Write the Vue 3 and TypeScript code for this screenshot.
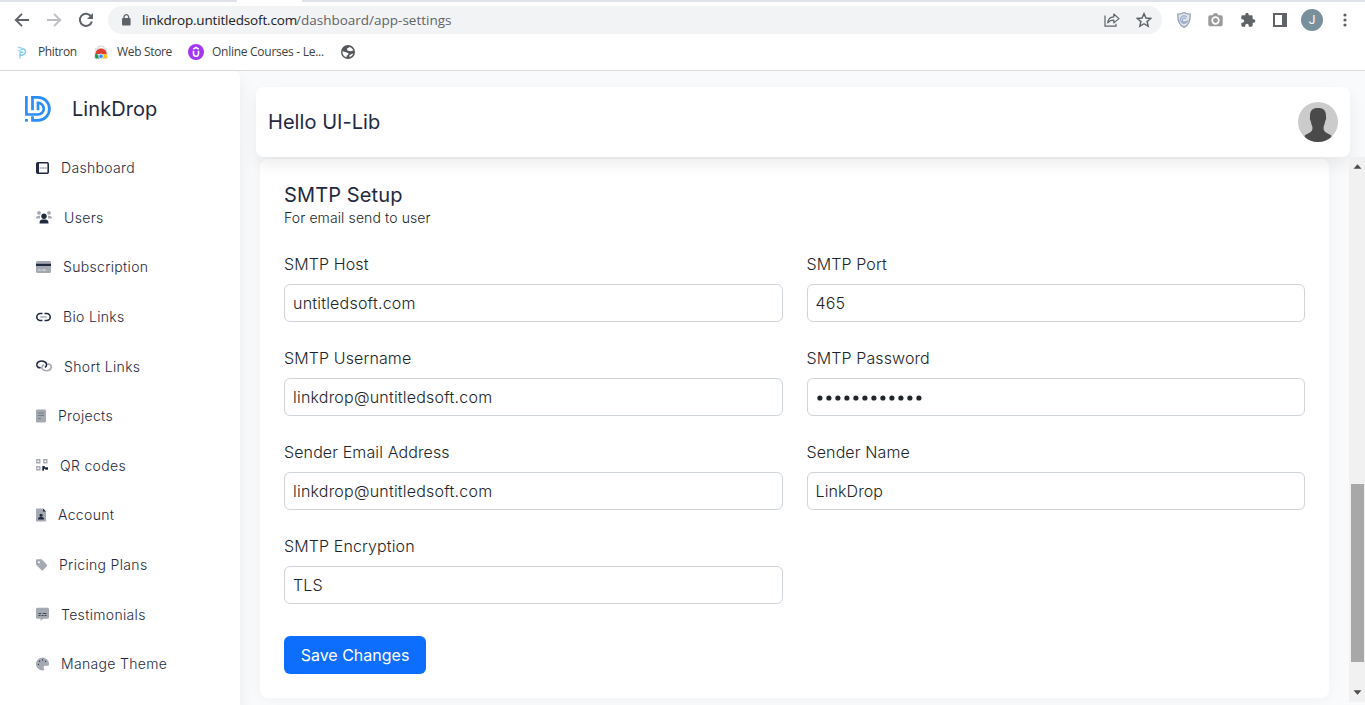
<script setup lang="ts">
interface NavItem {
  icon: string
  label: string
  width: number
}
interface Field {
  label: string
  value: string
  secret?: boolean
}

const navItems: NavItem[] = [
  { icon: 'dashboard', label: 'Dashboard', width: 13 },
  { icon: 'users', label: 'Users', width: 16 },
  { icon: 'card', label: 'Subscription', width: 15 },
  { icon: 'link', label: 'Bio Links', width: 15 },
  { icon: 'short', label: 'Short Links', width: 16 },
  { icon: 'projects', label: 'Projects', width: 10 },
  { icon: 'qr', label: 'QR codes', width: 12 },
  { icon: 'account', label: 'Account', width: 10 },
  { icon: 'tag', label: 'Pricing Plans', width: 11 },
  { icon: 'chat', label: 'Testimonials', width: 13 },
  { icon: 'palette', label: 'Manage Theme', width: 13 },
]

const fields: Field[] = [
  { label: 'SMTP Host', value: 'untitledsoft.com' },
  { label: 'SMTP Port', value: '465' },
  { label: 'SMTP Username', value: 'linkdrop@untitledsoft.com' },
  { label: 'SMTP Password', value: '12', secret: true },
  { label: 'Sender Email Address', value: 'linkdrop@untitledsoft.com' },
  { label: 'Sender Name', value: 'LinkDrop' },
  { label: 'SMTP Encryption', value: 'TLS' },
]
</script>

<template>
  <div class="window">
    <header class="browser">
      <div class="tabstrip"><span class="tab-gap"></span></div>
      <div class="toolbar">
        <svg class="nav-ic back" width="16" height="16" viewBox="0 0 16 16"><path d="M15 8H2.2M8 1.8 1.8 8 8 14.2" fill="none" stroke="#5f6368" stroke-width="1.9" /></svg>
        <svg class="nav-ic fwd" width="16" height="16" viewBox="0 0 16 16"><path d="M1 8h12.8M8 1.8 14.2 8 8 14.2" fill="none" stroke="#bcbec1" stroke-width="1.9" /></svg>
        <svg class="nav-ic reload" width="16" height="16" viewBox="0 0 16 16"><path d="M13.1 4.4A6.1 6.1 0 1 0 13.9 9.4" fill="none" stroke="#5f6368" stroke-width="2" /><path d="M15 1v6H9z" fill="#5f6368" /></svg>
        <div class="omnibox">
          <svg class="lock" width="10" height="12" viewBox="0 0 10 12"><rect x="1" y="4" width="8.6" height="7.6" rx="1" fill="#5f6368" /><path d="M3 4.5V3a2.3 2.3 0 0 1 4.6 0v1.500" fill="none" stroke="#5f6368" stroke-width="1.300" /></svg>
          <span class="host">linkdrop.untitledsoft.com</span><span class="path">/dashboard/app-settings</span>
          <svg class="share" width="16" height="14" viewBox="0 0 16 14"><path d="M1 2.500v10.700h11v-2.500" fill="none" stroke="#5f6368" stroke-width="1.200" /><path d="M3.700 9.900C4.100 6 6.200 4.100 9.800 3.900V1L15 5.600 9.800 9.900V7.200C7.200 7.200 5.300 8 3.700 9.900z" fill="none" stroke="#5f6368" stroke-width="1.200" stroke-linejoin="round" /></svg>
          <svg class="star" width="16" height="16" viewBox="0 0 24 24"><path d="M12 2.500l2.900 6.600 7.200.6-5.500 4.700 1.700 7L12 17.600l-6.300 3.800 1.700-7-5.500-4.700 7.200-.6z" fill="none" stroke="#5f6368" stroke-width="2.200" /></svg>
        </div>
        <div class="extensions">
          <svg class="shield" width="14" height="16" viewBox="0 0 14 16"><path d="M7 .6C9 1.800 11 2.200 13.200 2.200 13.500 8.800 11.600 13.200 7 15.400 2.400 13.200.5 8.800.8 2.200 3 2.200 5 1.800 7 .6z" fill="#dfe3ea" stroke="#929dad" stroke-width="1.200" /><path d="M9.800 5A3.700 3.700 0 1 0 10.700 8.500M8.800 6.800a2 2 0 1 0 .2 2.200" fill="none" stroke="#9caac9" stroke-width="1.200" /></svg>
          <svg class="camera" width="15" height="14" viewBox="0 0 15 14"><path d="M2 2.300h2.500L6 .3h3l1.500 2H13a1.700 1.700 0 0 1 1.700 1.700v7.500A1.700 1.700 0 0 1 13 13.200H2A1.700 1.700 0 0 1 .3 11.500V4A1.700 1.700 0 0 1 2 2.300z" fill="#9a9a9a" /><circle cx="7.500" cy="7.500" r="3.300" fill="none" stroke="#fff" stroke-width="1.700" /></svg>
          <svg class="puzzle" width="16" height="16" viewBox="0 0 24 24"><path d="M20.500 11H19V7a2 2 0 0 0-2-2h-4V3.500a2.500 2.500 0 0 0-5 0V5H4a2 2 0 0 0-2 2v3.800h1.500a2.700 2.700 0 0 1 0 5.400H2V20c0 1.100.9 2 2 2h3.800v-1.500a2.700 2.700 0 0 1 5.400 0V22H17a2 2 0 0 0 2-2v-4h1.500a2.500 2.500 0 0 0 0-5z" fill="#5f6368" /></svg>
          <svg class="panel" width="14" height="14" viewBox="0 0 14 14"><path d="M1 1h12v12H1z" fill="none" stroke="#5f6368" stroke-width="2" /><path d="M9 1h4v12H9z" fill="#5f6368" /></svg>
          <span class="profile">J</span>
          <svg class="more" width="4" height="14" viewBox="0 0 4 14"><circle cx="2" cy="2" r="1.600" fill="#5f6368" /><circle cx="2" cy="7" r="1.600" fill="#5f6368" /><circle cx="2" cy="12" r="1.600" fill="#5f6368" /></svg>
        </div>
      </div>
      <div class="bookmarks">
        <svg class="bm-phitron" width="10" height="13" viewBox="0 0 10 13"><path d="M.8 1.200 4.500 2M1 4.200l2.200.8v7.500" fill="none" stroke="#9fd6f2" stroke-width="1.500" /><path d="M2.500 9C6 9.800 8.800 8 8.500 5.200 8.200 2.800 5.400 2.200 3.700 3.800M3.600 6.200h2.800" fill="none" stroke="#7cc8ec" stroke-width="1.500" /></svg>
        <span class="bm-text phitron">Phitron</span>
        <svg class="bm-store" width="14" height="14" viewBox="0 0 14 14"><path d="M4 4V2.500C4 1.500 5 1 7 1s3 .5 3 1.500V4" fill="none" stroke="#d5d5d5" stroke-width="1.200" /><path d="M1 3h12l1 10.500H0z" fill="#e2e2e2" /><path d="M1.500 9A5.600 5.600 0 0 1 12.700 9L7 9z" fill="#df3e32" /><path d="M1.400 8.500A6 6 0 0 0 1.600 13.500H6L4.300 10z" fill="#169b55" /><path d="M7 9h5.500a6 6 0 0 1 0 4.500H6z" fill="#fbc116" /><circle cx="7" cy="11.300" r="2.300" fill="#4285f4" stroke="#fff" stroke-width=".8" /></svg>
        <span class="bm-text store">Web Store</span>
        <svg class="bm-udemy" width="16" height="16" viewBox="0 0 16 16"><circle cx="8" cy="8" r="8" fill="#a435f0" /><path d="M5.500 6.800v3a2.500 2.500 0 0 0 5 0v-3M5.200 5.100 8 3.500l2.800 1.600" fill="none" stroke="#fff" stroke-width="1.600" /></svg>
        <span class="bm-text courses">Online Courses - Le...</span>
        <svg class="bm-globe" width="14" height="14" viewBox="0 0 14 14"><circle cx="7" cy="7" r="7" fill="#54575b" /><path d="M8.800 1.900 6 3.400l.3 2 3.200.9 2.800-.9A5.600 5.600 0 0 0 8.800 1.900zM1.500 6.300 5 7.300l2.500 1-.6 1.900-1.300.3v1.800C3.200 11.700 1.200 9.300 1.500 6.300zM8.500 12.200V10l1.800-.8 2-.6c-.6 1.900-1.900 3.100-3.800 3.600z" fill="#fff" /></svg>
      </div>
    </header>

    <div class="app">
      <aside class="sidebar">
        <div class="brand">
          <svg width="27" height="27" viewBox="0 0 27 27" fill="none" stroke="#2b8df5" stroke-width="2.700">
            <path d="M2.400 0v18.500H14a5.800 5.800 0 0 0 0-11.600h-1.300" />
            <path d="M7.200 1.400H14a11.400 11.400 0 0 1 0 22.900H8.500v-4" />
            <path d="M8.500 0v14.200M14 7v7.200" />
            <path d="M1 24.300h2.900" />
          </svg>
          <span>LinkDrop</span>
        </div>
        <nav>
          <a v-for="item in navItems" :key="item.label" class="nav-item">
            <svg :width="item.width" height="14" :viewBox="`0 0 ${item.width} 14`">
              <g v-if="item.icon === 'dashboard'"><rect x=".8" y="1.800" width="11.400" height="10.400" rx="1" fill="#fff" stroke="#1f2940" stroke-width="1.600" /><path d="M1.800 2v10" stroke="#1f2940" stroke-width="2.400" /><path d="M3.500 7h8" stroke="#8c94a0" stroke-width="1" /></g>
              <g v-else-if="item.icon === 'users'"><g fill="#a5a9b1"><circle cx="3" cy="2.900" r="1.900" /><circle cx="13" cy="2.900" r="1.900" /><path d="M0 8.500C0 6.200 1.500 5.500 4 5.700v2.800zM16 8.500c0-2.300-1.500-3-4-2.800v2.800z" /></g><circle cx="8" cy="6.200" r="2.700" fill="#1f2940" /><path d="M3.500 13.500c0-3 1-4 3-4h3c2 0 3 1 3 4z" fill="#1f2940" /></g>
              <g v-else-if="item.icon === 'card'"><rect y="1" width="15" height="12" rx="1.600" fill="#a5a9b1" /><path d="M0 3.800h15v2.200H0z" fill="#1f2940" /><path d="M2 10h2.800M5.800 10h4" stroke="#e4e6e9" stroke-width="1.200" /></g>
              <g v-else-if="item.icon === 'link'" fill="none"><path d="M6.500 3.500H4.300a3.500 3.500 0 0 0 0 7h2.200M8.500 3.500h2.200a3.500 3.500 0 0 1 0 7H8.500" stroke="#1f2940" stroke-width="1.600" /><path d="M4.300 7h6.400" stroke="#a5a9b1" stroke-width="1.500" /></g>
              <g v-else-if="item.icon === 'short'" fill="none" stroke-width="1.600"><path d="M11.300 5.200c2.800-.5 4.200 1.100 3.900 3.100-.4 3.300-5 4.200-7.900 2.600-2.600-1.500-1.400-4.300.8-5.100" stroke="#a5a9b1" /><path d="M4.700 8.800C1.900 9 .5 7.200.9 5.200c.5-3.200 5-4 7.800-2.400 2.600 1.500 2.400 4.300.2 5.600" stroke="#1f2940" /></g>
              <g v-else-if="item.icon === 'projects'"><rect y=".5" width="10" height="13" rx="1.200" fill="#a5a9b1" /><path d="M2 4h6M2 6.500h6M2 9.500h3" stroke="#72777f" stroke-width=".9" /></g>
              <g v-else-if="item.icon === 'qr'"><path d="M.8 1.800h3v3h-3zM7.800 1.800h3v3h-3zM.8 8.800h3v3h-3z" fill="none" stroke="#a5a9b1" stroke-width="1.400" /><path d="M6.300 8h2.500v1.300H12v2.500H9.200v-1H8v2H6.300z" fill="#1f2940" /></g>
              <g v-else-if="item.icon === 'account'"><path d="M1 .5h6l3 3v9a1 1 0 0 1-1 1H1a1 1 0 0 1-1-1v-11a1 1 0 0 1 1-1z" fill="#a5a9b1" /><path d="M7 .5 10 3.500H7z" fill="#1f2940" /><circle cx="5" cy="7.200" r="1.500" fill="#1f2940" /><path d="M2 11.500c0-2 1-2.500 3-2.500s3 .5 3 2.500z" fill="#1f2940" /></g>
              <g v-else-if="item.icon === 'tag'"><path d="M0 2.500C0 1.800.5 1.300 1.200 1.300h4.500L11 6.700c.4.400.4 1 0 1.400L7 12.200c-.4.400-1 .4-1.400 0L0 6.800z" fill="#a5a9b1" /><circle cx="2.900" cy="4.200" r="1" fill="#fff" /></g>
              <g v-else-if="item.icon === 'chat'"><path d="M1.500.8h10A1.500 1.500 0 0 1 13 2.300v8a1.500 1.500 0 0 1-1.500 1.500H7.500L4.500 13.800v-2h-3A1.500 1.500 0 0 1 0 10.300v-8A1.500 1.500 0 0 1 1.500.8z" fill="#a5a9b1" /><path d="M2.500 6.500h2.800M6.800 6.500h3.700M2.500 8.500h2M5.500 8.500h2M8.500 8.500h2" stroke="#333b4c" stroke-width=".9" /></g>
              <g v-else><path d="M6.500.5A6.500 6.500 0 0 0 0 7c0 3.500 2.800 6.500 7 6.500 1.500 0 1.300-1.300.8-2.200-.6-1.200 0-2.500 1.500-2.500h2.500c.8 0 1.200-.8 1.200-1.800A6.500 6.500 0 0 0 6.500.5z" fill="#a5a9b1" /><g fill="#1f2940"><circle cx="2.400" cy="7.300" r=".65" /><circle cx="3.600" cy="4.200" r=".65" /><circle cx="6.600" cy="3" r=".65" /><circle cx="9.600" cy="4.300" r=".65" /></g></g>
            </svg>
            <span>{{ item.label }}</span>
          </a>
        </nav>
      </aside>

      <main class="main">
        <div class="topbar">
          <h1>Hello UI-Lib</h1>
          <svg width="40" height="40" viewBox="0 0 40 40">
            <defs><clipPath id="avatar-clip"><circle cx="20" cy="20" r="20" /></clipPath></defs>
            <g clip-path="url(#avatar-clip)"><path d="M0 0h40v40H0z" fill="#cbcbcb" /><path d="M20 6c5.500 0 8 2.600 8 8 0 1 .3 2.400 0 3.500-.2 1-.6 1-.8 1.500-.4 3-1.200 4.500-1.600 5.500v3c1.500 3.500 5 4 7.700 6V40H6.700v-6.500c2.700-2 6.200-2.500 7.700-6v-3c-.5-1-1.200-2.500-1.600-5.500-.2-.5-.6-.5-.8-1.500-.2-1 0-2.500 0-3.500 0-5.400 2.500-8 8-8z" fill="#4a4a4a" /></g>
          </svg>
        </div>
        <div class="scroller">
          <section class="card">
            <h2>SMTP Setup</h2>
            <p>For email send to user</p>
            <div class="form">
              <div v-for="field in fields" :key="field.label" class="field">
                <span class="label">{{ field.label }}</span>
                <div class="control" :class="{ spaced: field.value.includes('.') }">
                  <svg v-if="field.secret" class="dots" width="110" height="8" viewBox="0 0 110 8"><circle v-for="n in Number(field.value)" :key="n" :cx="n * 9 - 5.100" cy="4" r="2.600" fill="#212529" /></svg>
                  <template v-else>{{ field.value }}</template>
                </div>
              </div>
            </div>
            <button type="button">Save Changes</button>
          </section>
          <div class="scrollbar">
            <svg width="9" height="5" viewBox="0 0 9 5"><path d="M.5 4.800 4.500.3l4 4.500z" fill="#4d4d4d" /></svg>
            <span class="thumb"></span>
            <svg width="9" height="5" viewBox="0 0 9 5"><path d="M.5.2 4.500 4.700l4-4.500z" fill="#4d4d4d" /></svg>
          </div>
        </div>
      </main>
    </div>
  </div>
</template>

<style>
html,
body {
  margin: 0;
  overflow: hidden;
}
</style>

<style scoped>
* {
  box-sizing: border-box;
}
svg {
  display: block;
  flex: none;
}
.window {
  width: 1365px;
  height: 705px;
  display: flex;
  flex-direction: column;
  overflow: hidden;
  font-family: Inter, 'Liberation Sans', sans-serif;
  color: #212529;
  background: #f8fafc;
}
.browser {
  height: 71px;
  flex: none;
  background: #fff;
  border-bottom: 1px solid #d8dadd;
  font-family: 'Open Sans', 'Noto Sans', sans-serif;
}
.tabstrip {
  height: 2px;
  background: #dee1e6;
  padding-left: 237px;
}
.tab-gap {
  display: block;
  width: 65px;
  height: 2px;
  background: #fff;
}
.toolbar {
  height: 36px;
  display: flex;
  align-items: center;
  padding-left: 14px;
}
.fwd {
  margin-left: 16px;
}
.reload {
  margin-left: 16px;
}
.omnibox {
  width: 1054px;
  height: 28px;
  margin-left: 14px;
  border-radius: 14px;
  background: #f1f3f4;
  display: flex;
  align-items: center;
  padding-left: 13px;
  font-size: 13.500px;
  white-space: nowrap;
}
.host {
  width: 154px;
  margin-left: 11px;
  color: #202124;
  letter-spacing: -0.170px;
}
.path {
  color: #5f6368;
  letter-spacing: 0;
}
.share {
  margin-left: auto;
}
.star {
  margin: 0 10px 0 16px;
}
.extensions {
  display: flex;
  align-items: center;
  padding-left: 15px;
}
.camera {
  margin-left: 17px;
}
.puzzle {
  margin-left: 17px;
}
.panel {
  margin-left: 17px;
}
.profile {
  width: 22px;
  height: 22px;
  margin-left: 14px;
  border-radius: 50%;
  background: #78909c;
  color: #fff;
  font: 12px/22px Roboto, sans-serif;
  text-align: center;
}
.more {
  margin-left: 20px;
}
.bookmarks {
  height: 28px;
  display: flex;
  align-items: center;
  padding-left: 17px;
}
.bm-text {
  font-size: 12px;
  line-height: 16px;
  color: #3c4043;
  white-space: nowrap;
}
.phitron {
  width: 39px;
  margin-left: 11px;
  letter-spacing: -0.380px;
}
.bm-store {
  margin-left: 17px;
}
.store {
  width: 56px;
  margin-left: 9px;
  letter-spacing: -0.330px;
}
.bm-udemy {
  margin-left: 15px;
}
.courses {
  width: 114px;
  margin-left: 8px;
  letter-spacing: -0.270px;
}
.bm-globe {
  margin-left: 15px;
}
.app {
  flex: 1;
  min-height: 0;
  display: flex;
}
.sidebar {
  position: relative;
  z-index: 1;
  width: 240px;
  flex: none;
  background: #fff;
  border-top-right-radius: 6px;
  box-shadow: 0 8px 16px rgba(0, 0, 0, 0.07);
}
.brand {
  display: flex;
  align-items: center;
  height: 76px;
  padding-left: 24px;
  gap: 21px;
  font-size: 20px;
  letter-spacing: 0.060px;
  color: #1f2940;
}
.nav-item {
  display: flex;
  align-items: center;
  height: 49.600px;
  padding-left: 36px;
  gap: 12px;
  font-size: 14px;
  font-weight: 300;
  letter-spacing: 0.330px;
  color: #1f2940;
}
nav {
  margin-top: -4px;
}
.main {
  flex: 1;
  display: flex;
  flex-direction: column;
  padding: 16px 0 3px 16px;
}
.topbar {
  position: relative;
  z-index: 1;
  width: 1094px;
  height: 70px;
  flex: none;
  display: flex;
  align-items: center;
  justify-content: space-between;
  padding: 0 12px;
  background: #fff;
  border-radius: 8px;
  box-shadow: 0 8px 16px rgba(0, 0, 0, 0.07);
}
h1,
h2 {
  margin: 0;
  font-size: 20px;
  line-height: 24px;
  font-weight: 400;
  letter-spacing: 0.050px;
  color: #1f2940;
}
h2 {
  letter-spacing: 0.120px;
}
.scroller {
  flex: 1;
  min-height: 0;
  display: flex;
  justify-content: space-between;
  padding-left: 4px;
}
.card {
  width: 1069px;
  height: 539px;
  margin-top: 2px;
  padding: 24px;
  background: #fff;
  border-radius: 8px;
  box-shadow: 0 0 16px rgba(0, 0, 0, 0.04);
}
.card p {
  margin: 0;
  font-size: 14px;
  line-height: 21px;
  font-weight: 300;
  letter-spacing: 0.110px;
}
.form {
  display: grid;
  grid-template-columns: 1fr 1fr;
  gap: 24px;
  margin-top: 24px;
}
.label {
  display: block;
  height: 24px;
  margin-bottom: 8px;
  font-size: 16px;
  line-height: 24px;
  font-weight: 300;
  letter-spacing: 0.110px;
}
.control {
  display: flex;
  align-items: center;
  height: 38px;
  padding: 0 8px;
  border: 1px solid #ced4da;
  border-radius: 6px;
  font-size: 16px;
  font-weight: 300;
  letter-spacing: 0.100px;
}
.spaced {
  letter-spacing: 0.210px;
}
.dots {
  margin-top: 2px;
}
button {
  display: block;
  width: 142px;
  height: 38px;
  margin-top: 32px;
  padding: 0;
  border: 0;
  border-radius: 6px;
  background: #0d6efd;
  color: #fff;
  font: 400 16px Inter, sans-serif;
}
.scrollbar {
  position: relative;
  z-index: 2;
  width: 16px;
  display: flex;
  flex-direction: column;
  align-items: center;
  background: #f1f1f1;
  padding: 7px 0;
}
.thumb {
  width: 13px;
  height: 178px;
  margin: 315px 0 auto 1px;
  background: #a8a8a8;
}
</style>
